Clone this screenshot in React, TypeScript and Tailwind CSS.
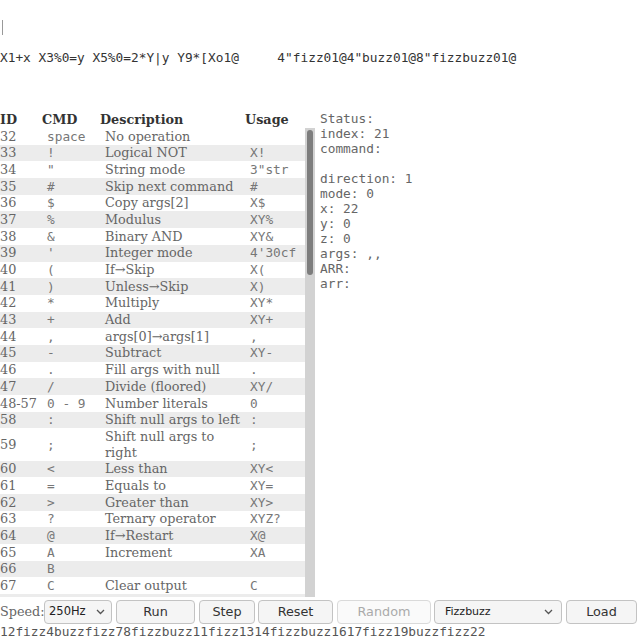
import React from 'react'

type Row = [string, string, string, string]

const rows: Row[] = [
  ['32', 'space', 'No operation', ''],
  ['33', '!', 'Logical NOT', 'X!'],
  ['34', '"', 'String mode', '3"str'],
  ['35', '#', 'Skip next command', '#'],
  ['36', '$', 'Copy args[2]', 'X$'],
  ['37', '%', 'Modulus', 'XY%'],
  ['38', '&', 'Binary AND', 'XY&'],
  ['39', "'", 'Integer mode', "4'30cf"],
  ['40', '(', 'If→Skip', 'X('],
  ['41', ')', 'Unless→Skip', 'X)'],
  ['42', '*', 'Multiply', 'XY*'],
  ['43', '+', 'Add', 'XY+'],
  ['44', ',', 'args[0]→args[1]', ','],
  ['45', '-', 'Subtract', 'XY-'],
  ['46', '.', 'Fill args with null', '.'],
  ['47', '/', 'Divide (floored)', 'XY/'],
  ['48-57', '0 - 9', 'Number literals', '0'],
  ['58', ':', 'Shift null args to left', ':'],
  ['59', ';', 'Shift null args to right', ';'],
  ['60', '<', 'Less than', 'XY<'],
  ['61', '=', 'Equals to', 'XY='],
  ['62', '>', 'Greater than', 'XY>'],
  ['63', '?', 'Ternary operator', 'XYZ?'],
  ['64', '@', 'If→Restart', 'X@'],
  ['65', 'A', 'Increment', 'XA'],
  ['66', 'B', '', ''],
  ['67', 'C', 'Clear output', 'C'],
  ['', '', '', ''],
]

const status = ['Status:', 'index: 21', 'command: ', ' ', 'direction: 1', 'mode: 0', 'x: 22', 'y: 0', 'z: 0', 'args: ,,', 'ARR:', 'arr:']

function Chevron() {
  return (
    <svg width="9" height="6" viewBox="0 0 9 6" fill="none" stroke="#555" strokeWidth="1.3">
      <path d="M1 1l3.5 3.5L8 1" />
    </svg>
  )
}

function Cols() {
  return (
    <colgroup>
      <col className="w-[42px]" />
      <col className="w-[58px]" />
      <col className="w-[145px]" />
      <col className="w-[60px]" />
    </colgroup>
  )
}

export default function App() {
  const btn = 'h-[24px] flex items-center justify-center rounded-[4px] border border-[#c3c3c3] bg-[#f5f5f5] text-[12.8px] text-[#333] font-["DejaVu_Sans",sans-serif]'
  const cell = 'h-[16.7px] py-[0.55px] leading-[15.6px] align-middle'

  return (
    <div className="w-[640px] h-[640px] overflow-hidden bg-white flex flex-col">
      {/* editor */}
      <div className="h-[50px] pt-[20px] pl-[2px]">
        <div className="w-px h-[15px] bg-[#999]" />
      </div>
      <div className="h-[15px] leading-[15px] text-[12.8px] text-[#333] whitespace-pre font-['DejaVu_Sans_Mono',monospace]">
        {'X1+x X3%0=y X5%0=2*Y|y Y9*[Xo1@     4"fizz01@4"buzz01@8"fizzbuzz01@'}
      </div>

      {/* main */}
      <div className="mt-[46px] flex h-[486px] min-h-0">
        <div className="w-[315px] flex flex-col min-h-0 font-['DejaVu_Serif',serif] text-[12.8px]">
          <table className="w-[305px] table-fixed">
            <Cols />
            <thead>
              <tr className="text-left text-[#333] font-bold">
                <th className="py-px leading-[15px]">ID</th>
                <th className="py-px leading-[15px]">CMD</th>
                <th className="py-px leading-[15px]">Description</th>
                <th className="py-px leading-[15px]">Usage</th>
              </tr>
            </thead>
          </table>
          <div className="flex-1 min-h-0 flex">
            <div className="w-[305px] overflow-hidden">
              <table className="w-[305px] table-fixed">
                <Cols />
                <tbody>
                  {rows.map((r, i) => (
                    <tr key={i} className={i % 2 === 1 ? 'bg-[#ececec] text-[#666]' : 'bg-white text-[#666]'}>
                      <td className={cell}>{r[0]}</td>
                      <td className={cell + " pl-[5px] whitespace-pre text-[#777] font-['DejaVu_Sans_Mono',monospace]"}>{r[1]}</td>
                      <td className={cell + ' pl-[5px] pr-[2px]'}>{r[2]}</td>
                      <td className={cell + " pl-[5px] whitespace-pre text-[#777] font-['DejaVu_Sans_Mono',monospace]"}>{r[3]}</td>
                    </tr>
                  ))}
                </tbody>
              </table>
            </div>
            {/* scrollbar */}
            <div className="w-[10px] bg-[#d2d2d2] pt-[2px] px-[2px]">
              <div className="h-[145px] rounded-[3px] bg-[#7d7d7d]" />
            </div>
          </div>
        </div>

        <div className="pl-[5px] text-[12.8px] leading-[15px] text-[#666] whitespace-pre font-['DejaVu_Sans_Mono',monospace]">
          {status.map((s, i) => (
            <div key={i} className="h-[15px]">{s}</div>
          ))}
        </div>
      </div>

      {/* controls */}
      <div className="mt-[3px] flex items-center h-[24px]">
        <span className="w-[44px] text-[12.8px] text-[#666] font-['DejaVu_Serif',serif]">Speed:</span>
        <div className="w-[68px] h-[24px] flex items-center justify-between pl-[4px] pr-[6px] rounded-[4px] border border-[#c3c3c3] bg-[#f5f5f5] text-[11.5px] text-[#222] font-['DejaVu_Sans',sans-serif]">
          <span>250Hz</span>
          <Chevron />
        </div>
        <div className={btn + ' ml-[4px] w-[79px]'}>Run</div>
        <div className={btn + ' ml-[4px] w-[56px]'}>Step</div>
        <div className={btn + ' ml-[3px] w-[75px]'}>Reset</div>
        <div className="ml-[4px] w-[94px] h-[24px] flex items-center justify-center rounded-[4px] border border-[#dadada] bg-[#fafafa] text-[12.8px] text-[#aaa] font-['DejaVu_Sans',sans-serif]">Random</div>
        <div className="ml-[3px] w-[128px] h-[24px] flex items-center justify-between pl-[10px] pr-[8px] rounded-[4px] border border-[#c3c3c3] bg-[#f5f5f5] text-[11px] text-[#222] font-['DejaVu_Sans',sans-serif]">
          <span>Fizzbuzz</span>
          <Chevron />
        </div>
        <div className={btn + ' ml-[4px] w-[71px]'}>Load</div>
      </div>
      <div className="h-[15px] leading-[15px] text-[12.8px] text-[#555] whitespace-pre font-['DejaVu_Sans_Mono',monospace]">
        12fizz4buzzfizz78fizzbuzz11fizz1314fizzbuzz1617fizz19buzzfizz22
      </div>
    </div>
  )
}
